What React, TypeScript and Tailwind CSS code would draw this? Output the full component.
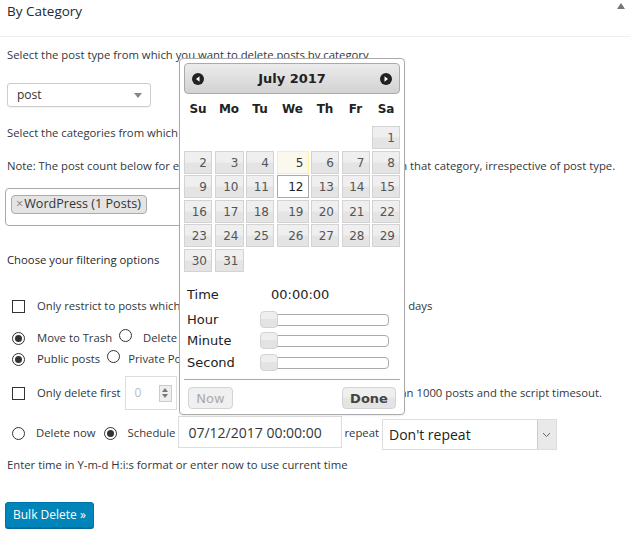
import React from 'react';

const weeks: (number | null)[][] = [
  [null, null, null, null, null, null, 1],
  [2, 3, 4, 5, 6, 7, 8],
  [9, 10, 11, 12, 13, 14, 15],
  [16, 17, 18, 19, 20, 21, 22],
  [23, 24, 25, 26, 27, 28, 29],
  [30, 31, null, null, null, null, null],
];
const dayNames = ['Su', 'Mo', 'Tu', 'We', 'Th', 'Fr', 'Sa'];

function Radio({ checked }: { checked?: boolean }) {
  return (
    <span className="inline-flex items-center justify-center w-[13px] h-[13px] rounded-full border border-[#333] bg-white shrink-0">
      {checked && <span className="w-[7px] h-[7px] rounded-full bg-[#333]" />}
    </span>
  );
}

function Check() {
  return <span className="inline-block w-[13px] h-[13px] border border-[#333] bg-white shrink-0" />;
}

function NavIcon({ dir }: { dir: 'prev' | 'next' }) {
  return (
    <svg width="12" height="12" viewBox="0 0 12 12">
      <circle cx="6" cy="6" r="6" fill="#222" />
      {dir === 'prev' ? <path d="M7.5 3.2 L4 6 L7.5 8.8 Z" fill="#fff" /> : <path d="M4.5 3.2 L8 6 L4.5 8.8 Z" fill="#fff" />}
    </svg>
  );
}

function SliderRow({ label }: { label: string }) {
  return (
    <div className="flex items-center h-[21.5px]">
      <span className="w-[76px] pl-[3px] text-[13px] text-[#222]">{label}</span>
      <div className="relative w-[129px] h-[12px] rounded-[4px] border border-[#aaa] bg-white">
        <span className="absolute left-[-1px] top-[-4px] w-[18px] h-[17px] rounded-[4px] border border-[#d3d3d3] bg-[linear-gradient(to_bottom,#eee_50%,#e3e3e3_50%)]" />
      </div>
    </div>
  );
}

function DatePicker() {
  return (
    <div className="absolute left-[179px] top-[58px] w-[226px] h-[357px] rounded-[4px] border border-[#aaa] bg-white p-[4px] font-['DejaVu_Sans',sans-serif] shadow-[0_1px_2px_rgba(0,0,0,0.08)]">
      <div className="flex items-center justify-between h-[31px] rounded-[4px] border border-[#aaa] bg-[linear-gradient(to_bottom,#ececec,#d2d2d2)] px-[7px]">
        <NavIcon dir="prev" />
        <span className="text-[13px] font-bold text-[#222]">July 2017</span>
        <NavIcon dir="next" />
      </div>
      <div className="grid grid-cols-[28px_29px_28px_32px_28px_28px_28px] gap-x-[2.5px] mt-[4px]">
        {dayNames.map(d => (
          <div key={d} className="h-[22px] flex items-center justify-center text-[12px] font-bold text-[#222]">{d}</div>
        ))}
      </div>
      <div className="grid grid-cols-[28px_29px_28px_32px_28px_28px_28px] gap-x-[2.5px] gap-y-[1.6px] mt-[6px]">
        {weeks.flat().map((d, i) => {
          if (d === null) return <div key={i} className="h-[23px]" />;
          let cls = 'border-[#d3d3d3] bg-[linear-gradient(to_bottom,#efefef_45%,#e4e4e4_55%)] text-[#555]';
          if (d === 5) cls = 'border-[#fcefa1] bg-[#fbf9ee] text-[#363636]';
          if (d === 12) cls = 'border-[#aaa] bg-white text-[#212121]';
          return (
            <div key={i} className={`h-[23px] border flex items-center justify-end pr-[4px] pt-[1px] text-[12px] ${cls}`}>
              {d}
            </div>
          );
        })}
      </div>
      <div className="mt-[12px] flex items-center h-[22px]">
        <span className="w-[87px] pl-[3px] text-[13px] text-[#222]">Time</span>
        <span className="text-[13px] text-[#222]">00:00:00</span>
      </div>
      <div className="mt-[3px]">
        <SliderRow label="Hour" />
        <SliderRow label="Minute" />
        <SliderRow label="Second" />
      </div>
      <div className="mt-[6px] border-t border-[#aaa] flex items-center justify-between pt-[7px] px-[4px]">
        <button className="h-[22px] w-[45px] rounded-[4px] border border-[#d3d3d3] bg-[#f0f0f0] text-[13px] text-[#aaa]">Now</button>
        <button className="h-[22px] w-[54px] rounded-[4px] border border-[#d3d3d3] bg-[linear-gradient(to_bottom,#efefef_45%,#e4e4e4_55%)] text-[13px] font-bold text-[#444]">Done</button>
      </div>
    </div>
  );
}

export default function App() {
  return (
    <div className="relative w-[630px] h-[535px] overflow-hidden bg-white font-['Open_Sans',sans-serif] text-[11.3px] text-[#32373c]">
      <div className="flex items-center justify-between h-[37px] border-b border-[#eee] pl-[7px] pr-[5px]">
        <span className="text-[13.5px] text-[#23282d] -mt-[13px]">By Category</span>
        <svg width="8" height="6" viewBox="0 0 8 6" className="-mt-[24px]"><path d="M4 0 L8 6 L0 6 Z" fill="#72777c" /></svg>
      </div>

      <div className="pl-[7px]">
        <p className="mt-[9px] h-[18px] leading-[18px]">Select the post type from which you want to delete posts by category</p>

        <div className="mt-[19px] w-[144px] h-[24px] rounded-[3px] border border-[#ccc] flex items-center justify-between pl-[9px] pr-[8px] shadow-[0_1px_1px_rgba(0,0,0,0.05)]">
          <span className="text-[12px] text-[#333]">post</span>
          <svg width="8" height="5" viewBox="0 0 8 5"><path d="M0 0 L8 0 L4 5 Z" fill="#888" /></svg>
        </div>

        <p className="mt-[17px] h-[18px] leading-[18px]">Select the categories from which you want to delete posts</p>
        <p className="mt-[15px] h-[18px] leading-[18px]">Note: The post count below for each category is the total number of posts in that category, irrespective of post type.</p>

        <div className="mt-[13px] -ml-[2px] w-[390px] h-[38px] rounded-[4px] border border-[#aaa] pt-[6px] pl-[5px]">
          <span className="inline-flex items-center h-[19px] rounded-[4px] border border-[#aaa] bg-[#e4e4e4] pl-[4px] pr-[5px] text-[12.6px] text-[#333]">
            <span className="text-[#888] mr-[1px]">×</span>WordPress (1 Posts)
          </span>
        </div>

        <p className="mt-[25px] h-[18px] leading-[18px] text-[#23282d]">Choose your filtering options</p>

        <div className="mt-[28px] h-[18px] flex items-center pl-[5px]">
          <Check />
          <span className="ml-[12px]">Only restrict to posts which are older than</span>
          <span className="ml-[4px] w-[146px]" />
          <span>days</span>
        </div>

        <div className="mt-[14px] h-[18px] flex items-center pl-[5px]">
          <Radio checked />
          <span className="ml-[12px]">Move to Trash</span>
          <span className="ml-[7px]"><Radio /></span>
          <span className="ml-[11px]">Delete permanently</span>
        </div>

        <div className="mt-[3px] h-[18px] flex items-center pl-[5px]">
          <Radio checked />
          <span className="ml-[12px]">Public posts</span>
          <span className="ml-[7px]"><Radio /></span>
          <span className="ml-[8px]">Private Posts</span>
        </div>

        <div className="mt-[8px] h-[34px] flex items-center pl-[5px]">
          <Check />
          <span className="ml-[12px]">Only delete first</span>
          <div className="ml-[4px] w-[52px] h-[34px] border border-[#ddd] bg-white flex items-center justify-between pl-[9px] pr-[4px]">
            <span className="text-[12px] text-[#bbb]">0</span>
            <span className="flex flex-col w-[13px] h-[17px] border border-[#ccc] bg-[#eee] items-center justify-center gap-[2px]">
              <svg width="6" height="4" viewBox="0 0 6 4"><path d="M3 0 L6 4 L0 4 Z" fill="#777" /></svg>
              <svg width="6" height="4" viewBox="0 0 6 4"><path d="M0 0 L6 0 L3 4 Z" fill="#777" /></svg>
            </span>
          </div>
          <span className="ml-[4px]">posts. Use this option if there are more than 1000 posts and the script timesout.</span>
        </div>

        <div className="mt-[6px] h-[32px] flex items-center pl-[5px] pt-[2px]">
          <Radio />
          <span className="ml-[11px]">Delete now</span>
          <span className="ml-[8px]"><Radio checked /></span>
          <span className="ml-[11px]">Schedule</span>
          <div className="ml-[3px] -mt-[2px] w-[164px] h-[32px] border border-[#ddd] flex items-center pl-[9px] text-[14px] text-[#32373c]">07/12/2017 00:00:00</div>
          <span className="ml-[2px]">repeat</span>
          <div className="ml-[3px] mt-[3px] w-[175px] h-[31px] border border-[#ddd] flex items-center justify-between pl-[6px]">
            <span className="text-[14px] text-[#222]">Don't repeat</span>
            <span className="w-[19px] h-[29px] bg-[#e9e9e9] border-l border-[#ccc] flex items-center justify-center">
              <svg width="9" height="6" viewBox="0 0 9 6"><path d="M1 1 L4.5 4.5 L8 1" fill="none" stroke="#666" strokeWidth="1" /></svg>
            </span>
          </div>
        </div>

        <p className="mt-[8px] h-[18px] leading-[18px]">Enter time in Y-m-d H:i:s format or enter now to use current time</p>

        <button className="mt-[28px] -ml-[2px] h-[26px] px-[7px] rounded-[3px] border border-[#0073aa] bg-[#0085ba] text-[12px] text-white shadow-[0_1px_0_#006799]">
          Bulk Delete »
        </button>
      </div>

      <DatePicker />
    </div>
  );
}
